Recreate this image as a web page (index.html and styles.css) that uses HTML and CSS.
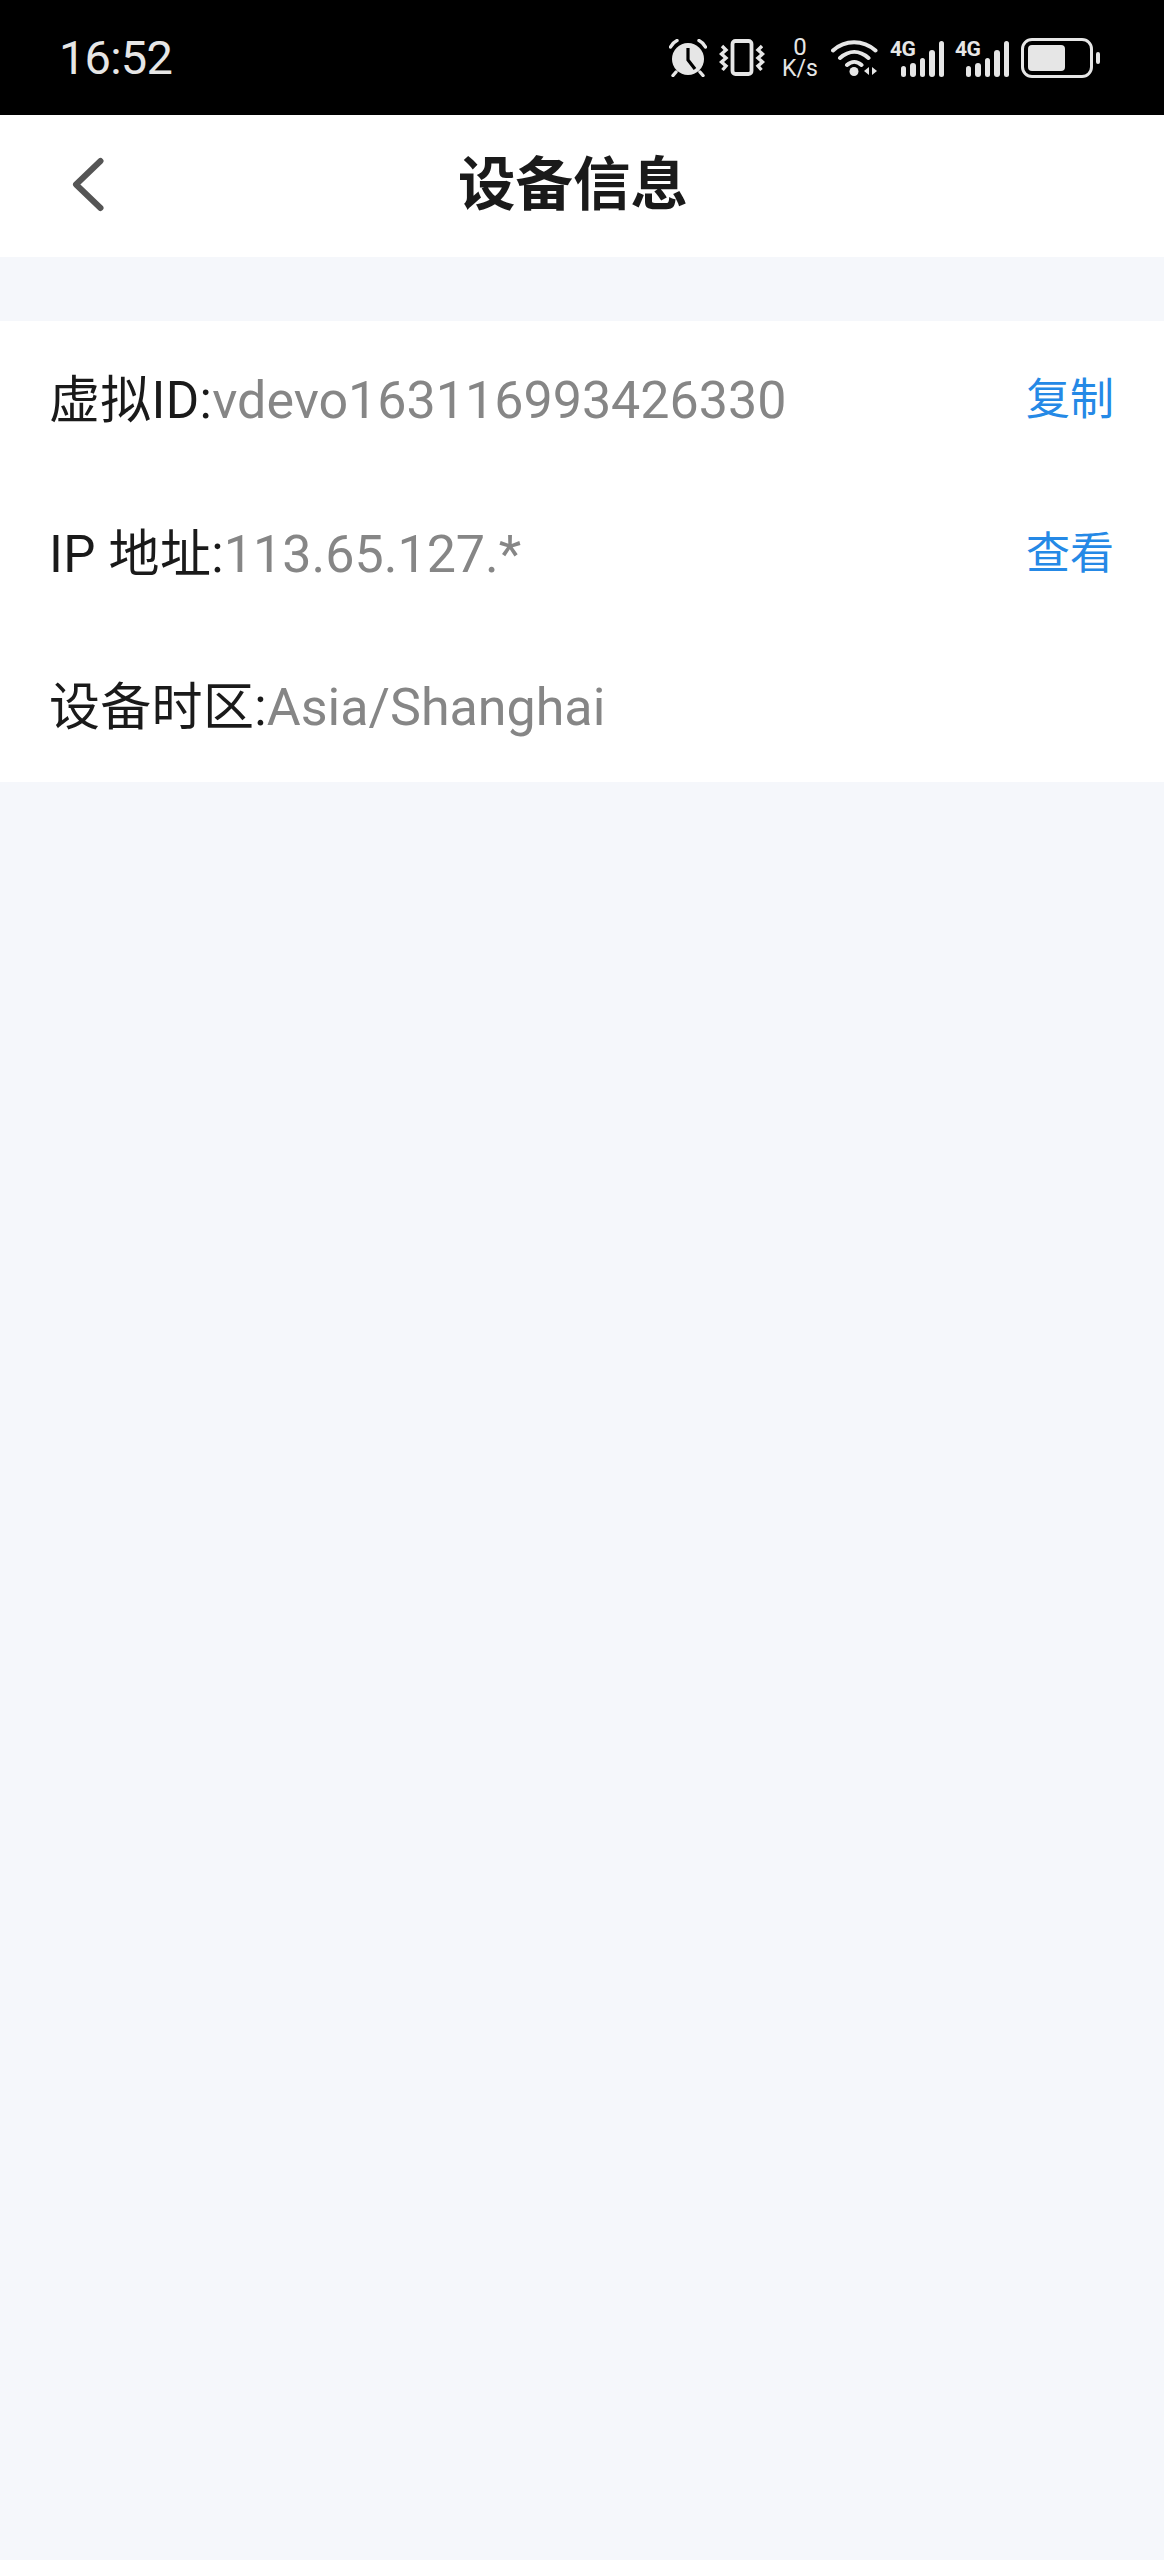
FILE: index.html
```html
<!DOCTYPE html>
<html lang="zh-CN">
  <head>
    <meta charset="UTF-8" />
    <meta name="viewport" content="width=device-width, initial-scale=1.0" />
    <title>设备信息</title>
    <link rel="stylesheet" href="styles.css">
  </head>
  <body>
    <div class="statusbar">
      <span class="time">16:52</span>
      <div class="status-icons">
        <svg class="icon-alarm" width="38" height="38" viewBox="0 0 38 38">
          <circle cx="19" cy="20" r="16" fill="#e6e6e6" />
          <path d="M19 9v12l7 9" fill="none" stroke="#000" stroke-width="3.200" />
          <path d="M1.500 8C3 5 5 3 8 1.500M36.500 8C35 5 33 3 30 1.500M7 33l-3 3.500M31 33l3 3.500" fill="none" stroke="#e6e6e6" stroke-width="3.400" stroke-linecap="round" />
        </svg>
        <svg class="icon-vibrate" width="46" height="38" viewBox="0 0 46 38">
          <rect x="13.500" y="2" width="19" height="33" rx="3" fill="none" stroke="#e6e6e6" stroke-width="3.800" />
          <path d="M3 7 7 11 2.500 15 7 19 2.500 23 7 27 3.500 31M43 7 39 11 43.500 15 39 19 43.500 23 39 27 42.500 31" fill="none" stroke="#e6e6e6" stroke-width="3.400" />
        </svg>
        <div class="netspeed"><span class="netspeed-num">0</span><span class="netspeed-unit">K/s</span></div>
        <svg class="icon-wifi" width="48" height="38" viewBox="0 0 48 38">
          <path d="M2 11.500C14 .5 32 .5 44.500 11.500M9 19C18 11 28.500 11 37.500 19M16 26C20.500 22 26 22 30.500 26" fill="none" stroke="#e6e6e6" stroke-width="4" stroke-linecap="round" />
          <circle cx="23" cy="32.500" r="4.500" fill="#e6e6e6" />
          <path d="M38 28v8l-5-4zM41 28v8l5-4z" fill="#e6e6e6" />
        </svg>
        <div class="signal">
          <span class="signal-type">4G</span>
          <i class="bar bar1"></i><i class="bar bar2"></i><i class="bar bar3"></i><i class="bar bar4"></i><i class="bar bar5"></i>
        </div>
        <div class="signal">
          <span class="signal-type">4G</span>
          <i class="bar bar1"></i><i class="bar bar2"></i><i class="bar bar3"></i><i class="bar bar4"></i><i class="bar bar5"></i>
        </div>
        <div class="battery">
          <div class="battery-body"><div class="battery-level"></div></div>
          <div class="battery-nub"></div>
        </div>
      </div>
    </div>

    <div class="header">
      <svg class="back" width="34" height="56" viewBox="0 0 34 56">
        <path d="M29.500 5 5 28.500 29.500 52" fill="none" stroke="#555" stroke-width="6" stroke-linecap="round" stroke-linejoin="round" />
      </svg>
      <h1 class="title">设备信息</h1>
    </div>

    <div class="card">
      <div class="row">
        <p><span class="label">虚拟ID:</span><span class="value">vdevo163116993426330</span></p>
        <a class="action">复制</a>
      </div>
      <div class="row">
        <p><span class="label">IP 地址:</span><span class="value">113.65.127.*</span></p>
        <a class="action">查看</a>
      </div>
      <div class="row">
        <p><span class="label">设备时区:</span><span class="value">Asia/Shanghai</span></p>
      </div>
    </div>
  </body>
</html>
```

FILE: styles.css
```css
* {
  margin: 0;
  padding: 0;
  box-sizing: border-box;
  font-family: "Roboto", "Noto Sans CJK SC", sans-serif;
}

body {
  width: 1164px;
  height: 2560px;
  background: #f5f7fb;
  overflow: hidden;
}

.statusbar {
  height: 115px;
  background: #000;
  display: flex;
  justify-content: space-between;
  align-items: center;
  padding: 0 64px 0 59px;
  color: #e6e6e6;
}

.time {
  font-size: 47px;
  letter-spacing: -0.8px;
}

.status-icons {
  display: flex;
  align-items: center;
}

.status-icons svg {
  display: block;
}

.icon-vibrate {
  margin-left: 12px;
}

.netspeed {
  width: 38px;
  margin-left: 16px;
  display: flex;
  flex-direction: column;
  align-items: center;
  line-height: 21px;
}

.netspeed-num {
  font-size: 24px;
}

.netspeed-unit {
  font-size: 23px;
}

.icon-wifi {
  margin-left: 12px;
}

.signal {
  width: 54px;
  height: 38px;
  margin-left: 11px;
  display: flex;
  align-items: flex-end;
  justify-content: flex-end;
  gap: 4px;
  position: relative;
}

.signal-type {
  position: absolute;
  left: 0;
  top: -2px;
  font-size: 21px;
  font-weight: 700;
  line-height: 24px;
  letter-spacing: -0.5px;
}

.bar {
  width: 5.500px;
  background: #e6e6e6;
  border-radius: 3px;
}

.bar1 { height: 11px; }
.bar2 { height: 14px; }
.bar3 { height: 19px; }
.bar4 { height: 27px; }
.bar5 { height: 36px; }

.battery {
  margin-left: 12px;
  display: flex;
  align-items: center;
  gap: 3px;
}

.battery-body {
  width: 72px;
  height: 40px;
  border: 3px solid #e6e6e6;
  border-radius: 11px;
  padding: 4px;
}

.battery-level {
  width: 37px;
  height: 100%;
  background: #e6e6e6;
  border-radius: 4px;
}

.battery-nub {
  width: 4px;
  height: 12px;
  background: #e6e6e6;
  border-radius: 2px;
}

.header {
  height: 142px;
  background: #fff;
  display: flex;
  justify-content: center;
  align-items: center;
  position: relative;
}

.back {
  position: absolute;
  left: 71px;
  top: 41px;
}

.title {
  font-size: 57.500px;
  line-height: 136px;
  font-weight: 700;
  color: #1a1a1a;
  margin-right: 18px;
}

.card {
  margin-top: 64px;
  background: #fff;
}

.row {
  height: 153.700px;
  padding: 0 50px 4px 49px;
  display: flex;
  justify-content: space-between;
  align-items: center;
  font-size: 51px;
}

.label {
  color: #1a1a1a;
  letter-spacing: 0.3px;
}

.value {
  font-size: 52px;
  color: #868686;
}

.action {
  font-size: 44px;
  color: #2589e6;
}
```
